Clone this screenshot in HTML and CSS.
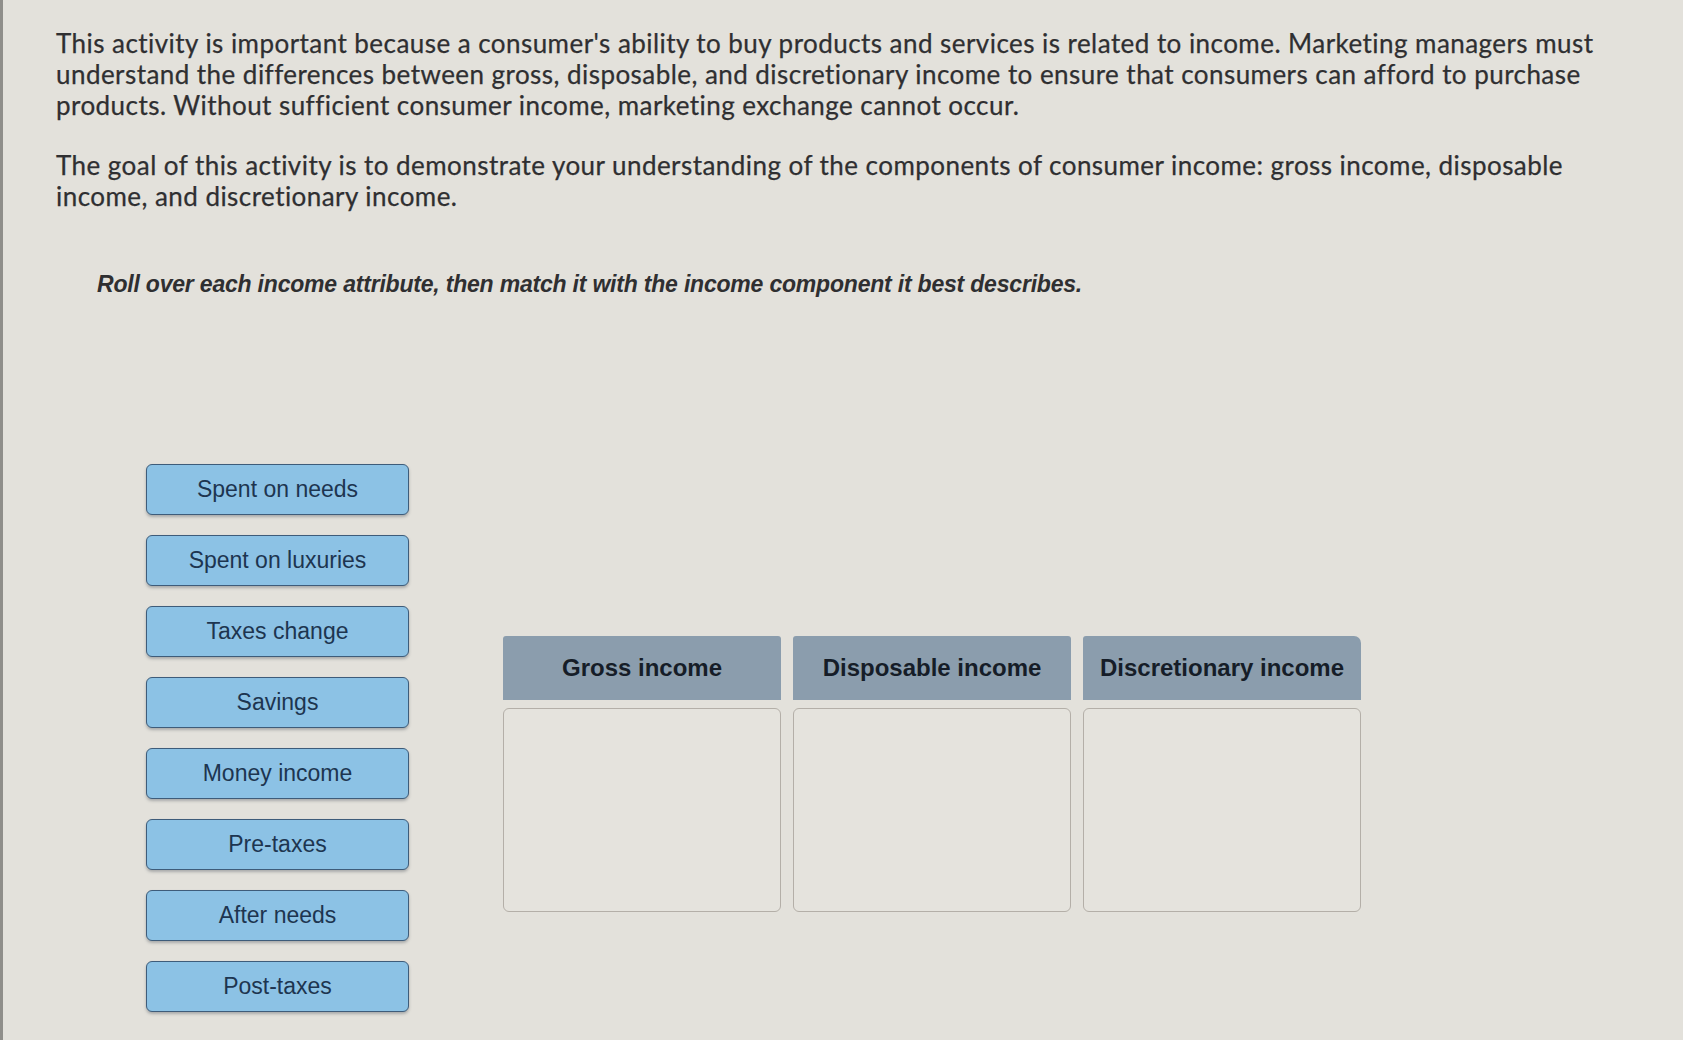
FILE: index.html
```html
<!DOCTYPE html>
<html lang="en">
<head>
<meta charset="utf-8">
<title>Consumer income activity</title>
<link rel="stylesheet" href="styles.css">
</head>
<body>
<main class="activity">
  <section class="intro">
    <p class="lead">This activity is important because a consumer's ability to buy products and services is related to income. Marketing managers must understand the differences between gross, disposable, and discretionary income to ensure that consumers can afford to purchase products. Without sufficient consumer income, marketing exchange cannot occur.</p>
    <p class="lead">The goal of this activity is to demonstrate your understanding of the components of consumer income: gross income, disposable income, and discretionary income.</p>
    <p class="instruction">Roll over each income attribute, then match it with the income component it best describes.</p>
  </section>

  <section class="board">
    <ul class="chips">
      <li class="chip">Spent on needs</li>
      <li class="chip">Spent on luxuries</li>
      <li class="chip">Taxes change</li>
      <li class="chip">Savings</li>
      <li class="chip">Money income</li>
      <li class="chip">Pre-taxes</li>
      <li class="chip">After needs</li>
      <li class="chip">Post-taxes</li>
    </ul>

    <div class="targets">
      <div class="target">
        <div class="target-head">Gross income</div>
        <div class="drop"></div>
      </div>
      <div class="target">
        <div class="target-head">Disposable income</div>
        <div class="drop"></div>
      </div>
      <div class="target">
        <div class="target-head">Discretionary income</div>
        <div class="drop"></div>
      </div>
    </div>
  </section>
</main>
</body>
</html>
```
FILE: styles.css
```css
html, body {
  margin: 0;
  padding: 0;
}

body {
  background: #e3e1db;
  border-left: 3px solid #8f8e8a;
  min-height: 1040px;
  box-sizing: border-box;
  font-family: Lato, "Liberation Sans", sans-serif;
  color: #2f2f31;
  overflow: hidden;
}

.activity {
  padding: 28px 0 0 53px;
}

.intro {
  width: 1575px;
}

.lead {
  margin: 0 0 29px;
  font-size: 26px;
  line-height: 31px;
  letter-spacing: 0.45px;
  -webkit-text-stroke: 0.25px #2f2f31;
}

.instruction {
  margin: 58px 0 0 41px;
  font-family: "Liberation Sans", Arial, sans-serif;
  font-style: italic;
  font-weight: bold;
  font-size: 23px;
  line-height: 28px;
  color: #2f2f31;
  letter-spacing: -0.2px;
}

.board {
  display: flex;
  align-items: flex-start;
  gap: 94px;
  margin: 166px 0 0 90px;
}

.chips {
  list-style: none;
  margin: 0;
  padding: 0;
  display: flex;
  flex-direction: column;
  gap: 20px;
  width: 263px;
}

.chip {
  height: 51px;
  box-sizing: border-box;
  display: flex;
  align-items: center;
  justify-content: center;
  background: #8cc2e5;
  border: 1.5px solid #3e5c7a;
  border-radius: 6px;
  box-shadow: 0 2px 3px rgba(60, 70, 80, 0.35);
  font-family: "Liberation Sans", Arial, sans-serif;
  font-size: 23px;
  color: #1d3550;
}

.targets {
  display: grid;
  grid-template-columns: repeat(3, 278px);
  gap: 12px;
  margin-top: 172px;
}

.target {
  display: flex;
  flex-direction: column;
  gap: 8px;
}

.target-head {
  height: 64px;
  display: flex;
  align-items: center;
  justify-content: center;
  background: #8b9dad;
  border-radius: 3px 3px 0 0;
  font-family: "Liberation Sans", Arial, sans-serif;
  font-weight: bold;
  font-size: 24px;
  color: #161d28;
}

.target:last-child .target-head {
  border-radius: 3px 7px 0 0;
}

.drop {
  height: 204px;
  box-sizing: border-box;
  border: 1.5px solid #b4afa8;
  border-radius: 6px;
  background: #e5e3dd;
}
```
